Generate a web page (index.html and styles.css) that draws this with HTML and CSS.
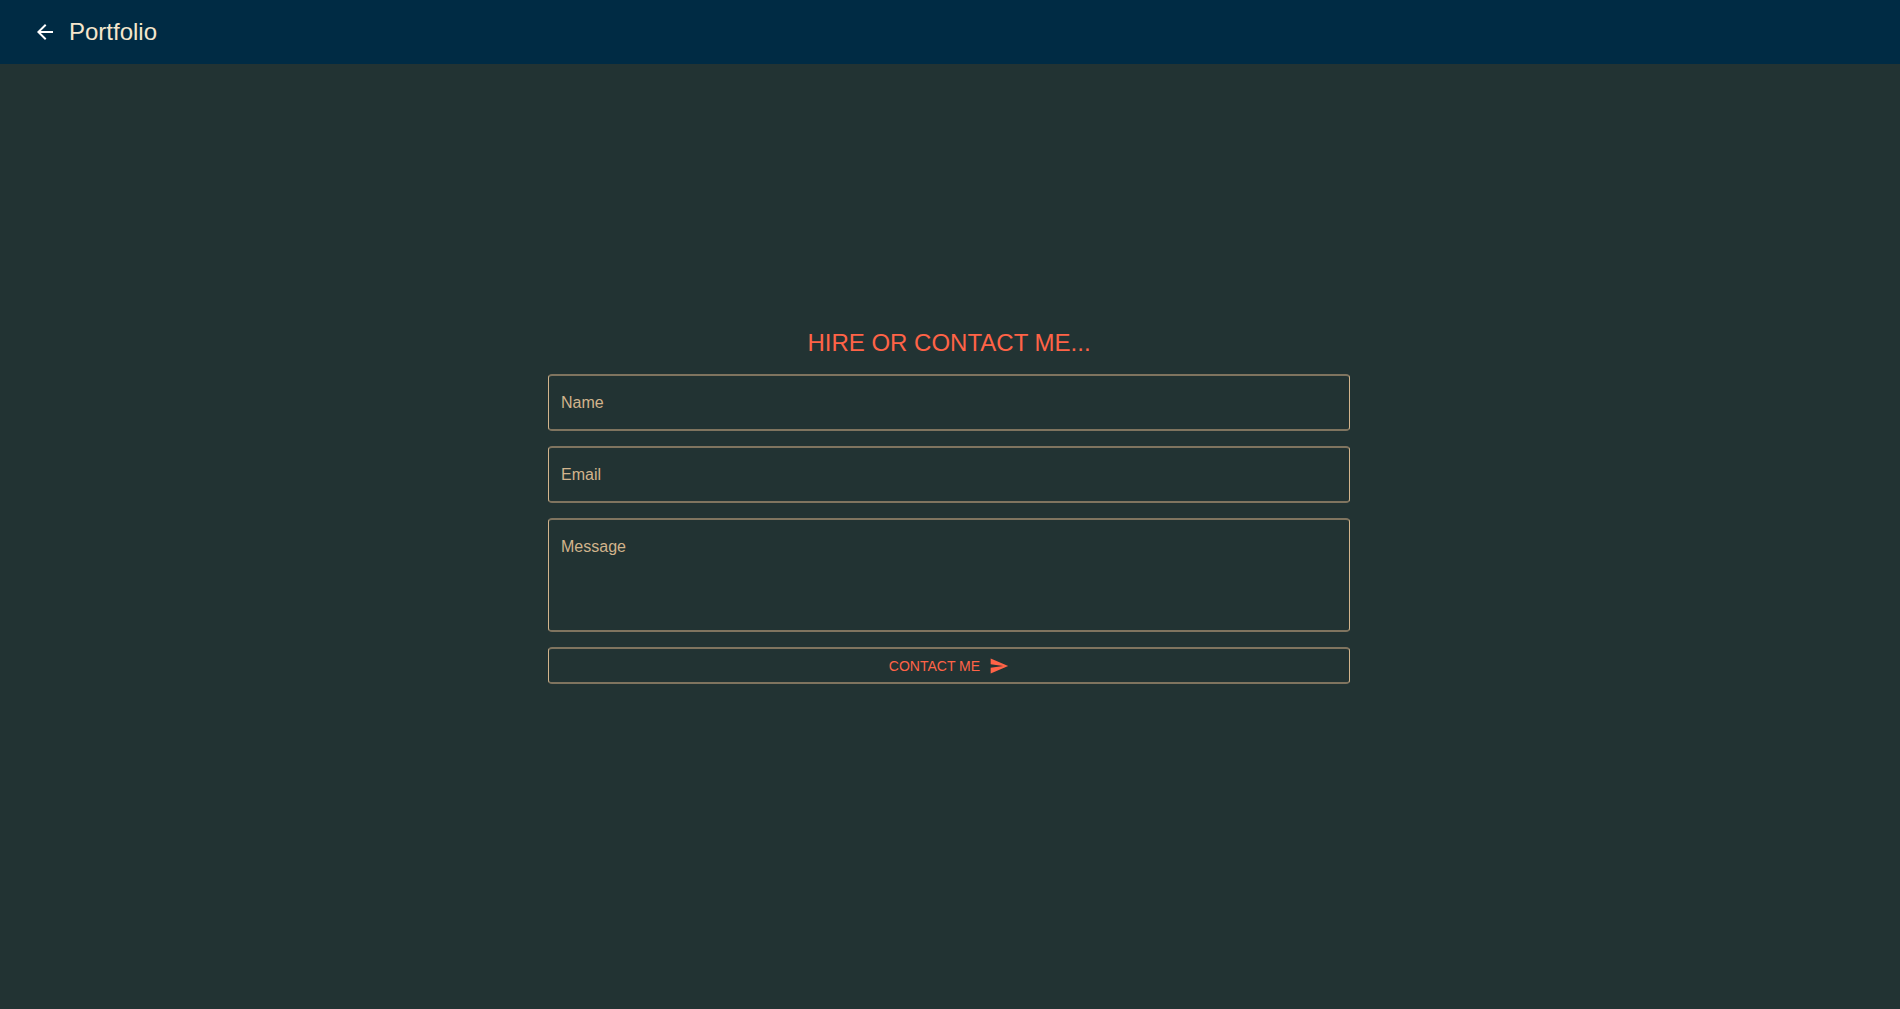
FILE: index.html
```html
<!DOCTYPE html>
<html lang="en">
<head>
<meta charset="utf-8">
<meta name="viewport" content="width=device-width, initial-scale=1">
<title>Portfolio</title>
<link rel="stylesheet" href="styles.css">
</head>
<body>
<header class="app-bar">
  <button class="icon-button" type="button" aria-label="Back">
    <svg viewBox="0 0 24 24" aria-hidden="true"><path d="M20 11H7.83l5.59-5.59L12 4l-8 8 8 8 1.41-1.41L7.83 13H20v-2z"/></svg>
  </button>
  <p class="brand">Portfolio</p>
</header>
<main class="contact">
  <form class="contact-form">
    <h1 class="title">Hire or contact me...</h1>
    <input class="field" type="text" name="name" aria-label="Name" placeholder="Name">
    <input class="field" type="email" name="email" aria-label="Email" placeholder="Email">
    <textarea class="field message" name="message" aria-label="Message" placeholder="Message"></textarea>
    <button class="submit" type="submit">Contact me
      <svg viewBox="0 0 24 24" aria-hidden="true"><path d="M2.01 21L23 12 2.01 3 2 10l15 2-15 2z"/></svg>
    </button>
  </form>
</main>
</body>
</html>
```
FILE: styles.css
```css
* {
  box-sizing: border-box;
}

body {
  display: flex;
  flex-direction: column;
  min-height: 100vh;
  margin: 0;
  background: #223333;
  font-family: "Liberation Sans", Arial, sans-serif;
}

.app-bar {
  display: flex;
  align-items: center;
  gap: 12px;
  min-height: 64px;
  padding: 0 33px;
  background: #002b44;
  color: #f5e6cc;
}

.icon-button {
  display: flex;
  padding: 0;
  border: 0;
  background: none;
  color: #fff;
}

svg {
  width: 24px;
  height: 24px;
  fill: currentColor;
}

.brand {
  margin: 0;
  font-size: 24px;
  line-height: 32px;
}

/* The bottom padding offsets the app bar, so the form centres in the window. */
.contact {
  display: flex;
  flex: 1;
  justify-content: center;
  align-items: center;
  padding: 24px 26px 86px 24px;
}

.contact-form {
  display: flex;
  flex-direction: column;
  gap: 15px;
  width: 100%;
  max-width: 802px;
}

.title {
  margin: 0;
  color: tomato;
  font-size: 24px;
  font-weight: 400;
  line-height: 32px;
  text-align: center;
  text-transform: uppercase;
}

.field,
.submit {
  width: 100%;
  border: solid #7f745f;
  border-width: 2px 1px;
  border-left-color: tan;
  border-right-color: tan;
  border-radius: 4px;
  background: none;
}

.field {
  height: 57px;
  padding: 17px 12px;
  color: tan;
  font: 16px/19px "Liberation Sans", Arial, sans-serif;
}

.field::placeholder {
  color: tan;
  opacity: 1;
}

.message {
  display: block;
  height: 114px;
  resize: none;
}

.submit {
  display: flex;
  justify-content: center;
  align-items: center;
  gap: 9px;
  height: 37px;
  padding: 0;
  color: tomato;
  font: 14px/24px "Liberation Sans", Arial, sans-serif;
  text-transform: uppercase;
}

.submit svg {
  width: 20px;
  height: 20px;
}
```
